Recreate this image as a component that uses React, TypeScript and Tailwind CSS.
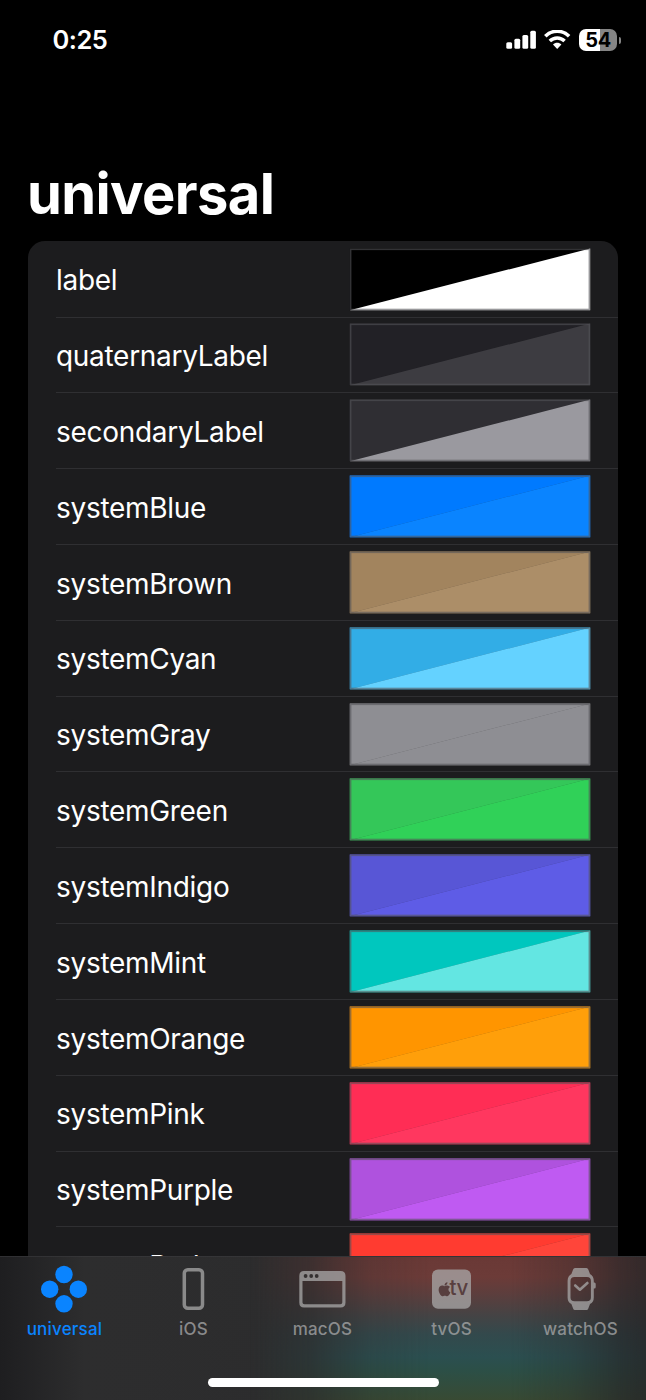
import type { ReactNode } from "react";
import { FaApple } from "react-icons/fa";

type ColorItem = { name: string; light: string; dark: string };

const colors: ColorItem[] = [
  { name: "label", light: "#000000", dark: "#ffffff" },
  { name: "quaternaryLabel", light: "#222126", dark: "#3d3c41" },
  { name: "secondaryLabel", light: "#2f2e33", dark: "#9a999f" },
  { name: "systemBlue", light: "#007aff", dark: "#0a84ff" },
  { name: "systemBrown", light: "#a2845e", dark: "#ac8e68" },
  { name: "systemCyan", light: "#32ade6", dark: "#64d2ff" },
  { name: "systemGray", light: "#8e8e93", dark: "#8e8e93" },
  { name: "systemGreen", light: "#34c759", dark: "#30d158" },
  { name: "systemIndigo", light: "#5856d6", dark: "#5e5ce6" },
  { name: "systemMint", light: "#00c7be", dark: "#63e6e2" },
  { name: "systemOrange", light: "#ff9500", dark: "#ff9f0a" },
  { name: "systemPink", light: "#ff2d55", dark: "#ff375f" },
  { name: "systemPurple", light: "#af52de", dark: "#bf5af2" },
  { name: "systemRed", light: "#ff3b30", dark: "#ff453a" },
];

function StatusBar() {
  return (
    <header className="flex h-20 shrink-0 items-center justify-between pl-[52.5px] pr-[25px] text-white">
      <div className="text-[25.5px] font-semibold leading-none tracking-[-0.5px]">0:25</div>
      <div className="flex items-center">
        <svg className="mr-[7px]" width="31" height="20" viewBox="0 0 31 20" fill="currentColor">
          <rect x="0.3" y="12.3" width="5.8" height="6.5" rx="1.5" />
          <rect x="8.4" y="8.8" width="5.8" height="10" rx="1.5" />
          <rect x="16.4" y="5" width="5.8" height="13.8" rx="1.5" />
          <rect x="24.3" y="0.8" width="5.6" height="18" rx="1.5" />
        </svg>
        <svg className="mr-2" width="27" height="20" viewBox="0 0 27 20" fill="none" stroke="currentColor">
          <path d="M1.3 6.3C8-.4 18.4-.4 25.1 6.3" strokeWidth="3.6" />
          <path d="M5.8 11C10 6.9 16.4 6.9 20.6 11" strokeWidth="3.5" />
          <path d="M9 14.5C11.3 12.1 15.1 12.1 17.4 14.5L13.2 18.9Z" fill="currentColor" stroke="none" />
        </svg>
        <div className="flex h-[22px] w-[38px] items-center justify-center rounded-[7px] bg-[linear-gradient(to_right,#fff_55%,#858585_55%)] text-[20px] font-bold leading-none tracking-[-0.5px] text-black">
          54
        </div>
        <div className="ml-[2px] h-[7px] w-[2px] rounded-r-full bg-[#858585]" />
      </div>
    </header>
  );
}

function Swatch({ light, dark }: { light: string; dark: string }) {
  return (
    <svg className="shrink-0" width="242" height="63" viewBox="0 0 242 63">
      <rect x="0.8" y="0.5" width="240.4" height="61.8" fill={light} opacity="0.6" />
      <polygon points="0.8,0.5 241.2,0.5 0.8,62.3" fill={light} />
      <polygon points="241.2,0.5 241.2,62.3 0.8,62.3" fill={dark} />
      <rect x="1.6" y="1.3" width="238.8" height="60.2" fill="none" stroke="#545458" strokeOpacity="0.6" strokeWidth="1.64" />
    </svg>
  );
}

function ColorRow({ item }: { item: ColorItem }) {
  return (
    <li className="flex h-[75.83px] pl-7">
      <div className="flex flex-1 items-center justify-between border-b border-[#2f2f32] pr-[27px]">
        <span className="pt-[2.4px] text-[28px] leading-none tracking-[-0.3px] text-white">{item.name}</span>
        <Swatch light={item.light} dark={item.dark} />
      </div>
    </li>
  );
}

function Tab({ label, active, children }: { label: string; active?: boolean; children: ReactNode }) {
  return (
    <div className={`flex w-[129px] flex-col items-center ${active ? "text-[#0a84ff]" : "text-[#a9a9aa]/75"}`}>
      <svg width="60" height="56" viewBox="0 0 60 56" fill="none">
        {children}
      </svg>
      <span className="mt-[7.5px] text-[17px] font-medium leading-none tracking-[0.2px]">{label}</span>
    </div>
  );
}

function TabBar() {
  return (
    <nav className="absolute inset-x-0 bottom-0 h-36 overflow-hidden border-t border-[#3b3b3d]/60 bg-[linear-gradient(to_right,#1e1e20_0%,#2d2d2e_13%,#2b2b2c_80%,#252527_100%)]">
      {/* colours of the rows scrolled behind the bar */}
      <div className="absolute inset-0 bg-[linear-gradient(to_bottom,#6a3936_0%,#6c3b38_14%,#5c3e3d_26%,#464344_40%,#33494c_54%,#2b4f50_70%,#2c4f46_80%,#384a33_100%)] [mask-image:linear-gradient(to_right,transparent_250px,#0004_310px,#000c_370px,#000_430px,#000_510px,#000b_570px,#0005_620px,#0003_646px)]" />
      <div className="relative flex flex-col items-center">
        <div className="flex w-full">
          <Tab label="universal" active>
            <g fill="currentColor">
              <circle cx="29" cy="17.5" r="8.7" />
              <circle cx="14.7" cy="32.2" r="8.7" />
              <circle cx="43.3" cy="32.2" r="8.7" />
              <circle cx="29" cy="46.8" r="8.7" />
            </g>
          </Tab>
          <Tab label="iOS">
            <rect x="20.3" y="12.7" width="18.2" height="38.5" rx="3.5" stroke="currentColor" strokeWidth="3.5" />
          </Tab>
          <Tab label="macOS">
            <path
              fill="currentColor"
              fillRule="evenodd"
              d="M11 14H47.500Q52.500 14 52.500 19V45.500Q52.500 50.500 47.500 50.500H11Q6.300 50.500 6.300 45.500V19Q6.300 14 11 14ZM9.500 24V45.500Q9.500 47.300 11.500 47.300H47.300Q49.300 47.300 49.300 45.500V24Z"
            />
            <g fill="#343030">
              <circle cx="12.6" cy="19" r="1.9" />
              <circle cx="18.2" cy="19" r="1.9" />
              <circle cx="23.7" cy="19" r="1.9" />
            </g>
          </Tab>
          <Tab label="tvOS">
            <rect x="10" y="12.5" width="39" height="39.2" rx="6" fill="currentColor" />
            <FaApple x="14.5" y="24.2" width="11.5" height="14.2" color="#583f3f" />
            <text x="27.6" y="38.2" fontSize="20.5" fontWeight="500" letterSpacing="-0.6" fill="#583f3f">tv</text>
          </Tab>
          <Tab label="watchOS">
            <path
              fill="currentColor"
              fillRule="evenodd"
              d="M24 11H35.500Q36.800 11 37.300 12.500L39 17Q42.800 19.200 42.800 24V25.500H43.400Q44.700 25.500 44.700 27V30Q44.700 31.500 43.400 31.500H42.800V40.500Q42.800 45.300 39 47L37.300 51.500Q36.800 53 35.500 53H24Q22.600 53 22.100 51.500L20.400 47Q16.600 45.300 16.600 40.500V24Q16.600 19.200 20.400 17L22.100 12.500Q22.600 11 24 11ZM23.500 20Q19.500 20 19.500 24V40.500Q19.500 44.300 23.500 44.300H35.900Q39.900 44.300 39.900 40.500V24Q39.900 20 35.900 20Z"
            />
            <path d="M24.200 28.500L28.900 32.700L36.400 26" stroke="currentColor" strokeWidth="2.6" strokeLinecap="round" strokeLinejoin="round" />
          </Tab>
        </div>
        <div className="mt-10 h-[9px] w-[231px] rounded-full bg-white" />
      </div>
    </nav>
  );
}

export default function App() {
  return (
    <div className="relative flex h-[1400px] w-[646px] flex-col overflow-hidden bg-black font-['Inter',sans-serif]">
      <StatusBar />
      <h1 className="mt-[86px] pl-[27px] text-[56px] font-bold leading-[56px] tracking-[-0.6px] text-white">universal</h1>
      <ul className="ml-7 mt-[19px] w-[590px] shrink-0 rounded-t-[17px] bg-[#1c1c1e] pt-[0.7px]">
        {colors.map((item) => (
          <ColorRow key={item.name} item={item} />
        ))}
      </ul>
      <TabBar />
    </div>
  );
}
